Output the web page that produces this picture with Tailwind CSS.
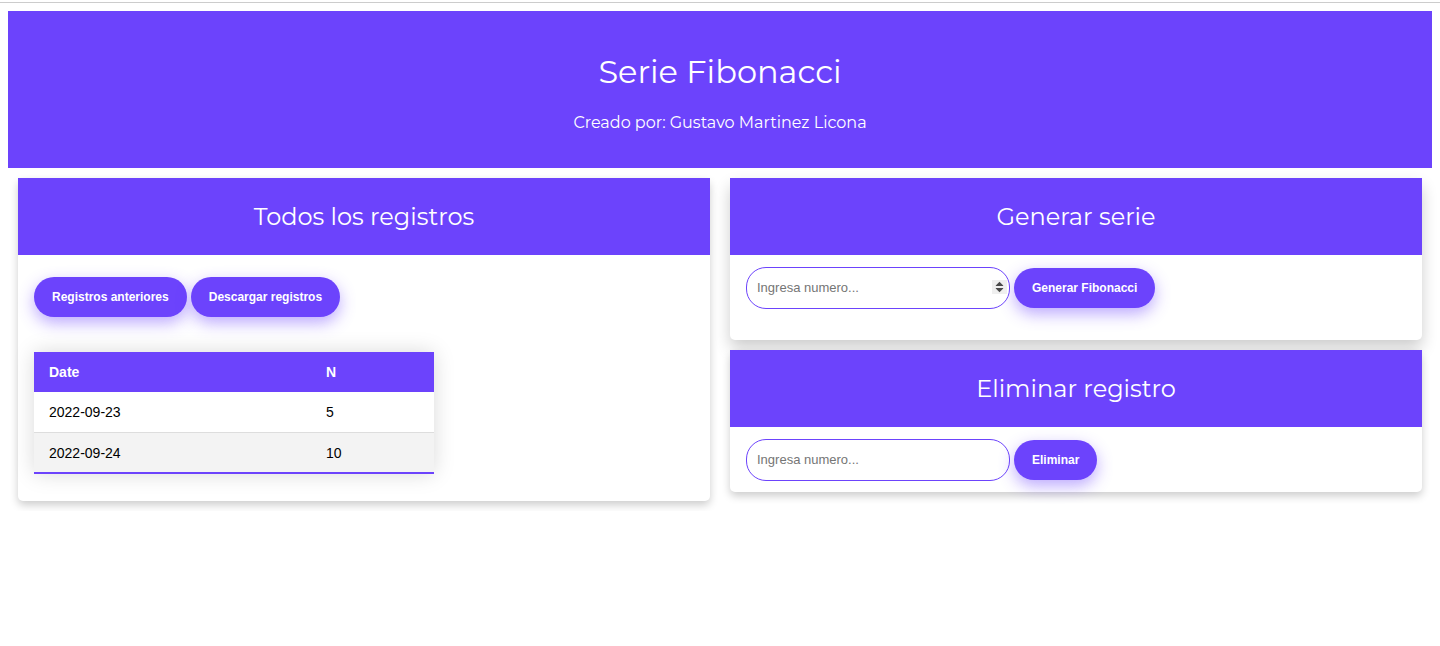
<!DOCTYPE html>
<html lang="es">
<head>
<meta charset="utf-8">
<meta name="viewport" content="width=device-width, initial-scale=1">
<title>Serie Fibonacci</title>
<script src="https://cdn.jsdelivr.net/npm/@tailwindcss/browser@4"></script>
</head>
<body class="bg-white pt-[2px] font-['Liberation_Sans',Arial,sans-serif] text-black">
<div class="border-t border-[#cccccc] px-2 pt-2">
  <header class="bg-[#6c43fc] pt-[39px] pb-[33px] text-center font-[Montserrat,Inter,sans-serif] text-white">
    <h1 class="text-[32px] leading-11">Serie Fibonacci</h1>
    <p class="mt-[17px] text-base leading-6">Creado por: Gustavo Martinez Licona</p>
  </header>
  <main class="grid items-start gap-5 p-[10px] md:grid-cols-2">
    <section class="rounded-[5px] pb-[27px] shadow-[0_4px_8px_0_rgba(0,0,0,0.2)]">
      <h2 class="bg-[#6c43fc] pt-[23px] pb-[22px] text-center font-[Montserrat,Inter,sans-serif] text-2xl leading-8 text-white">Todos los registros</h2>
      <div class="px-4 pt-[22px]">
        <div class="flex flex-wrap gap-1">
          <button type="button" class="h-10 rounded-[20px] bg-[#6c43fc] px-[18px] text-xs font-bold text-white shadow-[0_6px_16px_0_rgba(108,67,252,0.45)]">Registros anteriores</button>
          <button type="button" class="h-10 rounded-[20px] bg-[#6c43fc] px-[18px] text-xs font-bold text-white shadow-[0_6px_16px_0_rgba(108,67,252,0.45)]">Descargar registros</button>
        </div>
        <table class="mt-[35px] w-full max-w-[400px] border-collapse text-left text-[14px] leading-4 shadow-[0_0_20px_rgba(0,0,0,0.15)]">
          <thead>
            <tr class="bg-[#6c43fc] text-white"><th class="w-[277px] px-[15px] py-3">Date</th><th class="px-[15px] py-3">N</th></tr>
          </thead>
          <tbody>
            <tr class="border-b border-[#dddddd]"><td class="px-[15px] py-3">2022-09-23</td><td class="px-[15px] py-3">5</td></tr>
            <tr class="border-b-2 border-[#6c43fc] bg-[#f3f3f3]"><td class="px-[15px] pt-3 pb-[11px]">2022-09-24</td><td class="px-[15px] pt-3 pb-[11px]">10</td></tr>
          </tbody>
        </table>
      </div>
    </section>
    <div class="grid gap-[10px]">
      <section class="rounded-[5px] shadow-[0_8px_16px_0_rgba(0,0,0,0.2)]">
        <h2 class="bg-[#6c43fc] pt-[23px] pb-[22px] text-center font-[Montserrat,Inter,sans-serif] text-2xl leading-8 text-white">Generar serie</h2>
        <form class="flex flex-wrap items-center gap-1 px-4 pt-3 pb-[31px]">
          <div class="relative">
            <input type="number" aria-label="Numero para generar" placeholder="Ingresa numero..." class="h-[42px] w-[264px] rounded-[20px] border border-[#6c43fc] bg-white px-[10px] pb-[2px] text-[13px] [appearance:textfield] placeholder:text-[#757575]">
            <svg class="pointer-events-none absolute top-[13px] right-[3px] h-[14px] w-[15px]" viewBox="0 0 15 14" aria-hidden="true"><path fill="#efefef" d="M0 0h15v14H0z"/><path fill="#4a4a4a" d="M7.500 1.700 11.200 5.400v.6H3.800v-.6zM7.500 12.300 3.800 8.600V8h7.400v.6z"/></svg>
          </div>
          <button type="button" class="h-10 rounded-[20px] bg-[#6c43fc] px-[18px] text-xs font-bold text-white shadow-[0_6px_16px_0_rgba(108,67,252,0.45)]">Generar Fibonacci</button>
        </form>
      </section>
      <section class="rounded-[5px] shadow-[0_4px_8px_0_rgba(0,0,0,0.2)]">
        <h2 class="bg-[#6c43fc] pt-[23px] pb-[22px] text-center font-[Montserrat,Inter,sans-serif] text-2xl leading-8 text-white">Eliminar registro</h2>
        <form class="flex flex-wrap items-center gap-1 px-4 pt-3 pb-[11px]">
          <input type="number" aria-label="Numero del registro a eliminar" placeholder="Ingresa numero..." class="h-[42px] w-[264px] rounded-[20px] border border-[#6c43fc] bg-white px-[10px] pb-[2px] text-[13px] [appearance:textfield] placeholder:text-[#757575]">
          <button type="button" class="h-10 rounded-[20px] bg-[#6c43fc] px-[18px] text-xs font-bold text-white shadow-[0_6px_16px_0_rgba(108,67,252,0.45)]">Eliminar</button>
        </form>
      </section>
    </div>
  </main>
</div>
</body>
</html>
